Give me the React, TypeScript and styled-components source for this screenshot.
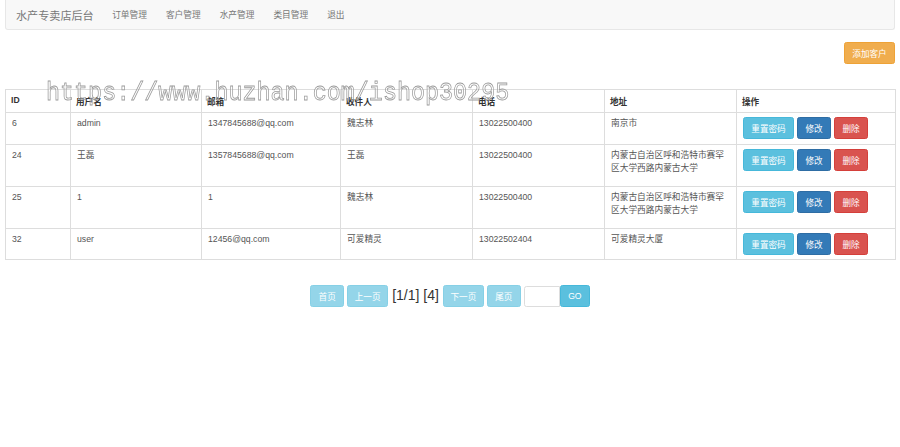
import { createGlobalStyle, styled } from 'styled-components';

const GlobalStyle = createGlobalStyle`
  html, body {
    margin: 0;
    padding: 0;
    background: #fff;
  }
  body {
    font-family: "Liberation Sans", "Noto Sans CJK SC", sans-serif;
    font-size: 8.7px;
    color: #333;
  }
`;

const Page = styled.div`
  position: relative;
  width: 900px;
  padding: 0 5px;
  box-sizing: border-box;
`;

const Navbar = styled.nav`
  display: flex;
  align-items: center;
  height: 29px;
  background: #f8f8f8;
  border: 1px solid #e7e7e7;
  border-top: none;
  border-radius: 0 0 3px 3px;
  padding-left: 10px;
`;

const Brand = styled.span`
  font-size: 11.1px;
  color: #777;
  padding-right: 9px;
`;

const NavLink = styled.a`
  font-size: 8.7px;
  color: #777;
  padding: 0 9.5px;
  text-decoration: none;
`;

const Toolbar = styled.div`
  display: flex;
  justify-content: flex-end;
  padding-top: 12px;
  margin-bottom: 25px;
`;

type Tone = 'info' | 'primary' | 'danger' | 'warning';

const tones: Record<Tone, { bg: string; border: string }> = {
  info: { bg: '#5bc0de', border: '#46b8da' },
  primary: { bg: '#337ab7', border: '#2e6da4' },
  danger: { bg: '#d9534f', border: '#d43f3a' },
  warning: { bg: '#f0ad4e', border: '#eea236' },
};

const Button = styled.button<{ $tone: Tone; $w?: number; $disabled?: boolean }>`
  height: 22px;
  width: ${p => (p.$w ? `${p.$w}px` : 'auto')};
  padding: 0 6px;
  font-family: inherit;
  font-size: 8.6px;
  color: #fff;
  background: ${p => tones[p.$tone].bg};
  border: 1px solid ${p => tones[p.$tone].border};
  border-radius: 2.5px;
  opacity: ${p => (p.$disabled ? 0.65 : 1)};
  cursor: pointer;
  white-space: nowrap;
`;

const Table = styled.table`
  width: 890px;
  border-collapse: collapse;
  border: 1px solid #ddd;
  table-layout: fixed;
`;

const Th = styled.th<{ $w: number }>`
  width: ${p => p.$w}px;
  text-align: left;
  font-weight: bold;
  color: #333;
  padding: 5px 5px 0;
  height: 23px;
  box-sizing: border-box;
  vertical-align: top;
  border: 1px solid #ddd;
  border-top: none;
  font-size: 8.6px;
`;

const Tr = styled.tr<{ $h: number }>`
  height: ${p => p.$h}px;
`;

const Td = styled.td`
  padding: 4px 5px 4px 6px;
  vertical-align: top;
  color: #555;
  line-height: 12.5px;
  border: 1px solid #ddd;
  word-break: break-all;
`;

const Actions = styled.div`
  display: flex;
  gap: 3px;
`;

const Pager = styled.div`
  display: flex;
  justify-content: center;
  align-items: center;
  gap: 3px;
  margin-top: 25px;
`;

const PageInfo = styled.span`
  font-size: 14px;
  color: #333;
  margin: -2px 1px 0;
`;

const PageInput = styled.input`
  width: 36px;
  height: 21px;
  box-sizing: border-box;
  border: 1px solid #ddd;
  border-radius: 2.5px 0 0 2.5px;
  margin-right: -3px;
`;

const Watermark = styled.div`
  position: absolute;
  left: 46px;
  top: 80px;
  font-family: "Liberation Mono", monospace;
  font-size: 23.4px;
  color: rgba(255, 255, 255, 0.3);
  -webkit-text-stroke: 0.7px #9a9a9a;
  transform: scaleY(1.12) translateZ(0);
  will-change: transform;
  pointer-events: none;
  white-space: nowrap;
`;

const rows = [
  { id: 6, user: 'admin', mail: '1347845688@qq.com', name: '魏志林', tel: '13022500400', addr: '南京市', h: 32 },
  { id: 24, user: '王磊', mail: '1357845688@qq.com', name: '王磊', tel: '13022500400', addr: '内蒙古自治区呼和浩特市赛罕区大学西路内蒙古大学', h: 42 },
  { id: 25, user: '1', mail: '1', name: '魏志林', tel: '13022500400', addr: '内蒙古自治区呼和浩特市赛罕区大学西路内蒙古大学', h: 42 },
  { id: 32, user: 'user', mail: '12456@qq.com', name: '可爱精灵', tel: '13022502404', addr: '可爱精灵大厦', h: 31 },
];

const App = () => {
  return (
    <Page>
      <GlobalStyle />
      <Navbar>
        <Brand>水产专卖店后台</Brand>
        <NavLink>订单管理</NavLink>
        <NavLink>客户管理</NavLink>
        <NavLink>水产管理</NavLink>
        <NavLink>类目管理</NavLink>
        <NavLink>退出</NavLink>
      </Navbar>
      <Toolbar>
        <Button $tone="warning" $w={51}>添加客户</Button>
      </Toolbar>
      <Table>
        <thead>
          <tr>
            <Th $w={65}>ID</Th>
            <Th $w={131}>用户名</Th>
            <Th $w={139}>邮箱</Th>
            <Th $w={132}>收件人</Th>
            <Th $w={132}>电话</Th>
            <Th $w={132}>地址</Th>
            <Th $w={159}>操作</Th>
          </tr>
        </thead>
        <tbody>
          {rows.map(r => (
            <Tr key={r.id} $h={r.h}>
              <Td>{r.id}</Td>
              <Td>{r.user}</Td>
              <Td>{r.mail}</Td>
              <Td>{r.name}</Td>
              <Td>{r.tel}</Td>
              <Td>{r.addr}</Td>
              <Td>
                <Actions>
                  <Button $tone="info" $w={51}>重置密码</Button>
                  <Button $tone="primary" $w={34}>修改</Button>
                  <Button $tone="danger" $w={34}>删除</Button>
                </Actions>
              </Td>
            </Tr>
          ))}
        </tbody>
      </Table>
      <Pager>
        <Button $tone="info" $w={34} $disabled>首页</Button>
        <Button $tone="info" $w={41} $disabled>上一页</Button>
        <PageInfo>[1/1] [4]</PageInfo>
        <Button $tone="info" $w={41} $disabled>下一页</Button>
        <Button $tone="info" $w={34} $disabled>尾页</Button>
        <PageInput />
        <Button $tone="info" $w={30}>GO</Button>
      </Pager>
      <Watermark>https://www.huzhan.com/ishop30295</Watermark>
    </Page>
  );
};

export default App;
